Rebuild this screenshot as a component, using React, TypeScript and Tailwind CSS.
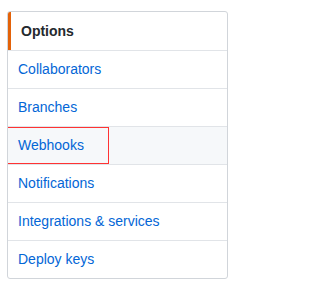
import React from 'react';

const items = [
  { label: 'Options', selected: true },
  { label: 'Collaborators' },
  { label: 'Branches' },
  { label: 'Webhooks', highlighted: true },
  { label: 'Notifications' },
  { label: 'Integrations & services' },
  { label: 'Deploy keys' },
];

export default function App() {
  return (
    <div className="w-[235px] h-[282px] bg-white pt-[11px] pl-[7px] font-['Liberation_Sans',Arial,sans-serif]">
      <nav className="w-[221px] border border-[#d1d5da] rounded-[3px] overflow-hidden">
        {items.map((item, i) => (
          <div
            key={item.label}
            className={`relative h-[38px] flex items-center pl-[10px] text-[14px] ${
              i > 0 ? 'border-t border-[#e1e4e8]' : 'h-[37px]'
            } ${item.highlighted ? 'bg-[#f6f8fa]' : ''} ${
              item.selected ? 'font-bold text-[#24292e] border-l-[3px] border-l-[#e36209] pl-[7px]' : 'text-[#0366d6]'
            }`}
          >
            {item.label}
            {/* annotation box */}
            {item.highlighted && (
              <div className="absolute left-[-1px] top-[0px] w-[102px] h-[37px] border border-[#ff3333]" />
            )}
          </div>
        ))}
      </nav>
    </div>
  );
}
